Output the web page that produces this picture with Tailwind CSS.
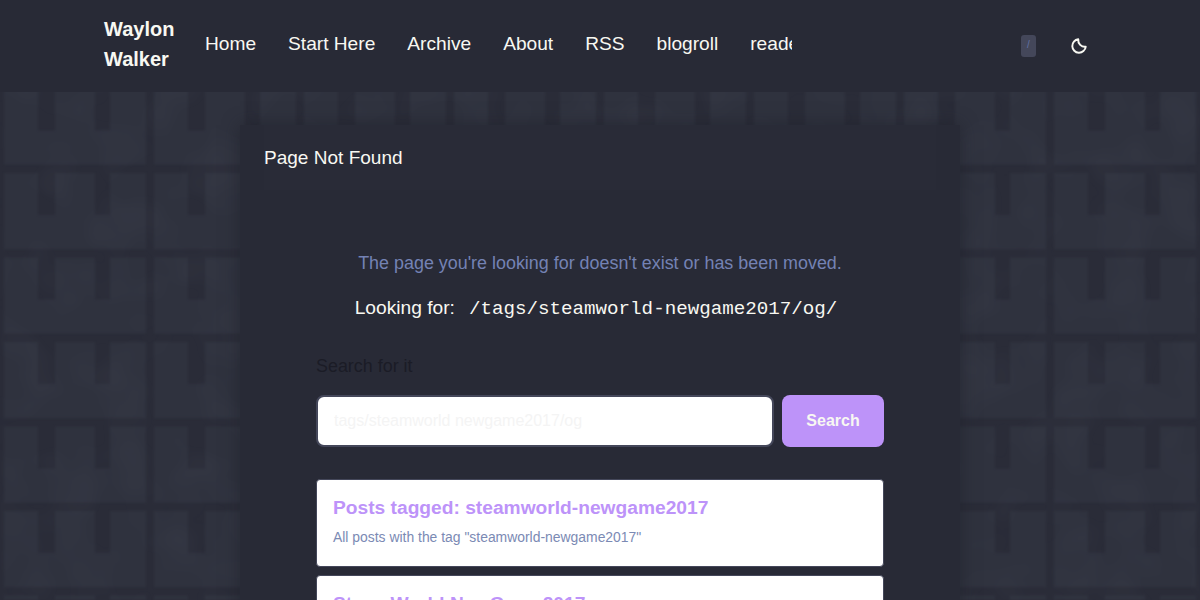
<!DOCTYPE html>
<html lang="en">

<head>
  <meta charset="UTF-8" />
  <meta name="viewport" content="width=device-width, initial-scale=1.0" />
  <title>Page Not Found - Waylon Walker</title>
  <script src="https://cdn.jsdelivr.net/npm/@tailwindcss/browser@4"></script>
</head>

<body class="relative h-screen overflow-hidden bg-[#2a2c38] font-['Liberation_Sans',Arial,sans-serif] text-[#f8f8f2]">
  <!-- background brick texture -->
  <svg class="absolute left-0 top-0 w-full h-full blur-[1px]" width="1200" height="600" aria-hidden="true">
    <defs>
      <pattern id="bricks" x="0" y="88.5" width="150" height="84.5" patternUnits="userSpaceOnUse">
        <path d="M4 0H38V42H55V0H95V42H110V0H146V76H4Z" fill="#2f323e" />
      </pattern>
      <filter id="mottle" x="0" y="0" width="100%" height="100%">
        <feTurbulence type="fractalNoise" baseFrequency="0.02" numOctaves="2" seed="4" />
        <feColorMatrix values="0 0 0 0 0.6  0 0 0 0 0.65  0 0 0 0 0.8  0.5 0 0 0 -0.2" />
      </filter>
    </defs>
    <rect width="1200" height="600" fill="url(#bricks)" />
    <rect width="1200" height="600" filter="url(#mottle)" opacity="0.12" />
  </svg>

  <header class="relative flex items-center h-[92px] pl-[104px] bg-[#282a36]">
    <a href="#" class="w-[70px] shrink-0 -mt-[4px] text-[20px] leading-[30px] font-bold">Waylon Walker</a>
    <nav class="flex gap-8 w-[587px] ml-[31px] overflow-hidden text-[19.15px] whitespace-nowrap -mt-[3px]">
      <a href="#">Home</a>
      <a href="#">Start Here</a>
      <a href="#">Archive</a>
      <a href="#">About</a>
      <a href="#">RSS</a>
      <a href="#">blogroll</a>
      <a href="#">reader</a>
    </nav>
    <kbd class="flex justify-center items-center w-[15px] h-[22px] ml-[229px] pb-1 rounded-[3px] bg-[#44475a] font-['Liberation_Sans',sans-serif] text-[10px] text-[#6272a4]">/</kbd>
    <button class="ml-[34px]">
      <svg class="w-[18px] h-[18px]" viewBox="0 0 24 24" fill="none" stroke="#f8f8f2" stroke-width="2.6" stroke-linecap="round" stroke-linejoin="round">
        <path d="M21 13A9 9 0 1 1 11 3 9 9 0 0 0 21 13z" />
      </svg>
    </button>
  </header>

  <main class="relative w-[720px] h-[600px] mx-auto mt-[33px] px-6 bg-[#282a36] shadow-[0_0_16px_rgba(30,31,41,0.6)]">
    <div class="h-[65px] pt-[20px] text-[19.05px] leading-[26px] bg-[#292b37]">Page Not Found</div>

    <div class="flex flex-col items-center">
      <p class="mt-[61px] text-[17.92px] leading-[24px] text-[#7482b4]">The page you're looking for doesn't exist or has been moved.</p>
      <p class="flex items-center mt-[22px] mr-2 text-[19.2px] leading-[24px]">
        <span class="-translate-y-px">Looking for:</span>
        <code class="ml-[14px] font-['Liberation_Mono',monospace]">/tags/steamworld-newgame2017/og/</code>
      </p>
    </div>

    <div class="w-[568px] mx-auto mt-[33px]">
      <label class="block text-[17.92px] leading-[24px] text-[#1b1c26]">Search for it</label>
      <form class="flex gap-2 mt-[17px]">
        <input type="text" placeholder="tags/steamworld newgame2017/og"
          class="w-[458px] h-[52px] px-4 rounded-lg border-2 border-[#44475a] bg-white text-[16px] outline-none placeholder:text-[#f4f4f4]" />
        <button type="button" class="w-[102px] h-[52px] rounded-lg bg-[#bd93f9] text-[16px] font-bold text-[#f8f8f2]">Search</button>
      </form>

      <div class="flex flex-col gap-2 mt-8">
        <a href="#" class="block h-[88px] px-4 pt-[14px] rounded border border-[#44475a] bg-white">
          <h3 class="text-[19.2px] leading-[28px] font-bold text-[#bd93f9]">Posts tagged: steamworld-newgame2017</h3>
          <p class="mt-[6px] text-[13.92px] leading-[19px] text-[#7b8ab4]">All posts with the tag "steamworld-newgame2017"</p>
        </a>
        <a href="#" class="block h-[88px] px-4 pt-[14px] rounded border border-[#44475a] bg-white">
          <h3 class="text-[19.2px] leading-[28px] font-bold text-[#bd93f9]">SteamWorld NewGame2017</h3>
        </a>
      </div>
    </div>
  </main>
</body>

</html>
